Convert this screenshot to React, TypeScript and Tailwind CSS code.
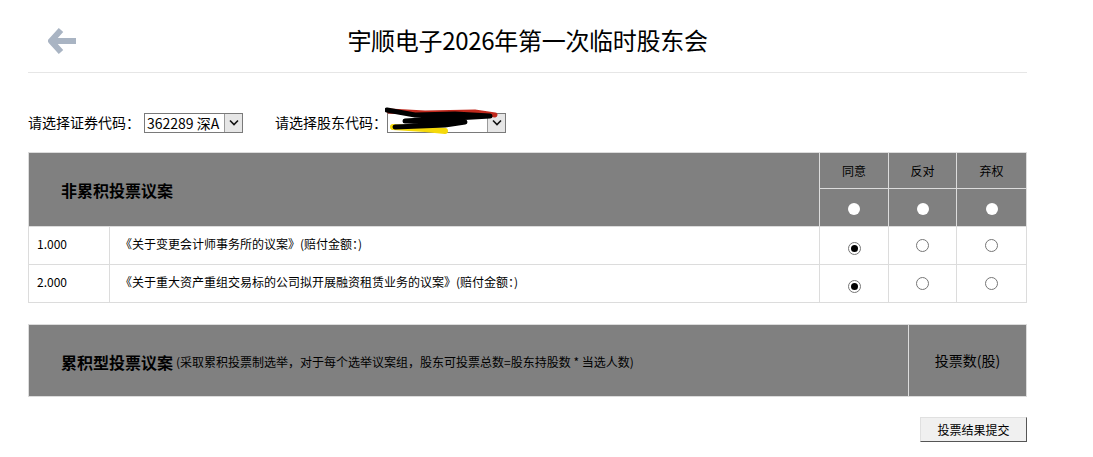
import { FC } from "react";

const font = { fontFamily: '"Noto Sans CJK SC", "Noto Sans", sans-serif' };

const Chevron: FC = () => (
  <svg width="10" height="7" viewBox="0 0 10 7">
    <path d="M1 1.5 L5 5.5 L9 1.5" fill="none" stroke="#111" strokeWidth="1.6" />
  </svg>
);

const FakeSelect: FC<{ width: string; children?: React.ReactNode }> = ({ width, children }) => (
  <div className={`relative flex h-[20px] items-stretch border border-[#7a7a7a] bg-white ${width}`}>
    <div className="flex flex-1 items-center overflow-hidden whitespace-nowrap pl-[2px] text-[14px] leading-none text-black">
      {children}
    </div>
    <div className="flex w-[18px] items-center justify-center border-l border-[#9a9a9a] bg-[#e6e6e6]">
      <Chevron />
    </div>
  </div>
);

const Radio: FC<{ checked?: boolean; head?: boolean }> = ({ checked, head }) => {
  if (head) return <span className="inline-block h-[12px] w-[12px] rounded-full bg-white" />;
  return (
    <span className="inline-flex h-[13px] w-[13px] items-center justify-center rounded-full border border-[#767676] bg-white">
      {checked && <span className="h-[7px] w-[7px] rounded-full bg-black" />}
    </span>
  );
};

const proposals = [
  { no: "1.000", text: "《关于变更会计师事务所的议案》(赔付金额：)" },
  { no: "2.000", text: "《关于重大资产重组交易标的公司拟开展融资租赁业务的议案》(赔付金额：)" },
];

const App: FC = () => {
  return (
    <div className="min-h-[457px] bg-white pt-[18px] text-black" style={font}>
      <div className="ml-[28px] w-[999px]">
        {/* header */}
        <div className="relative flex h-[55px] items-center justify-center border-b border-[#e6e6e6] pb-[10px]">
          <svg className="absolute left-[20px] top-[10px]" width="30" height="26" viewBox="0 0 30 26">
            <path d="M13 2 L3 13 L13 24 M4 13 L28 13" fill="none" stroke="#a9b4c3" strokeWidth="6" strokeLinejoin="round" />
          </svg>
          <div className="text-[24px] leading-none tracking-[-0.3px]">宇顺电子2026年第一次临时股东会</div>
        </div>

        {/* selects */}
        <div className="mt-[39px] flex items-center text-[14px]">
          <span>请选择证券代码：</span>
          <FakeSelect width="w-[99px] ml-[4px]">362289 深A</FakeSelect>
          <span className="ml-[32px]">请选择股东代码：</span>
          <div className="relative">
            <FakeSelect width="w-[119px]" />
            <svg className="absolute left-[-2px] top-[-6px]" width="115" height="28" viewBox="0 0 115 28">
              <path d="M4 4 L40 6 L90 5 L110 8" stroke="#c0281c" strokeWidth="5" fill="none" strokeLinecap="round" />
              <path d="M8 20 L40 22 L60 24" stroke="#f5d90a" strokeWidth="6" fill="none" strokeLinecap="round" />
              <path d="M2 3 L30 8 L70 7 L105 9 L20 14 L80 15 L60 18 L10 20" stroke="#000" strokeWidth="5" fill="none" strokeLinecap="round" strokeLinejoin="round" />
            </svg>
          </div>
        </div>

        {/* non-cumulative table */}
        <table className="mt-[19px] w-full border-collapse text-[12px]">
          <colgroup>
            <col className="w-[81px]" />
            <col />
            <col className="w-[69px]" />
            <col className="w-[68px]" />
            <col className="w-[70px]" />
          </colgroup>
          <tbody>
            <tr className="h-[36px] bg-[#808080]">
              <td colSpan={2} rowSpan={2} className="border border-[#dcdcdc] pl-[32px] text-[16px] font-bold">
                非累积投票议案
              </td>
              <td className="border border-[#dcdcdc] text-center">同意</td>
              <td className="border border-[#dcdcdc] text-center">反对</td>
              <td className="border border-[#dcdcdc] text-center">弃权</td>
            </tr>
            <tr className="h-[38px] bg-[#808080]">
              {[0, 1, 2].map((i) => (
                <td key={i} className="border border-[#dcdcdc] pt-[4px] text-center">
                  <Radio head />
                </td>
              ))}
            </tr>
            {proposals.map((p) => (
              <tr key={p.no} className="h-[38px]">
                <td className="border border-[#dcdcdc] pb-[4px] pl-[8px]">{p.no}</td>
                <td className="border border-[#dcdcdc] pb-[4px] pl-[10px]">{p.text}</td>
                <td className="border border-[#dcdcdc] pt-[2px] text-center">
                  <Radio checked />
                </td>
                <td className="border border-[#dcdcdc] pt-[2px] text-center">
                  <Radio />
                </td>
                <td className="border border-[#dcdcdc] pt-[2px] text-center">
                  <Radio />
                </td>
              </tr>
            ))}
          </tbody>
        </table>

        {/* cumulative table */}
        <div className="mt-[21px] flex h-[73px] border border-[#dcdcdc] bg-[#808080]">
          <div className="flex flex-1 items-center pl-[32px] pt-[2px]">
            <span className="text-[16px] font-bold">累积型投票议案</span>
            <span className="ml-[3px] text-[12px]">
              (采取累积投票制选举，对于每个选举议案组，股东可投票总数=股东持股数 * 当选人数)
            </span>
          </div>
          <div className="flex w-[118px] items-center justify-center border-l border-[#dcdcdc] text-[14px]">
            投票数(股)
          </div>
        </div>

        {/* submit */}
        <div className="mt-[20px] flex justify-end">
          <button className="h-[25px] w-[107px] border border-[#e0e0e0] border-b-[#555] border-r-[#555] bg-[#f0f0f0] text-[12px]">
            投票结果提交
          </button>
        </div>
      </div>
    </div>
  );
};

export default App;
